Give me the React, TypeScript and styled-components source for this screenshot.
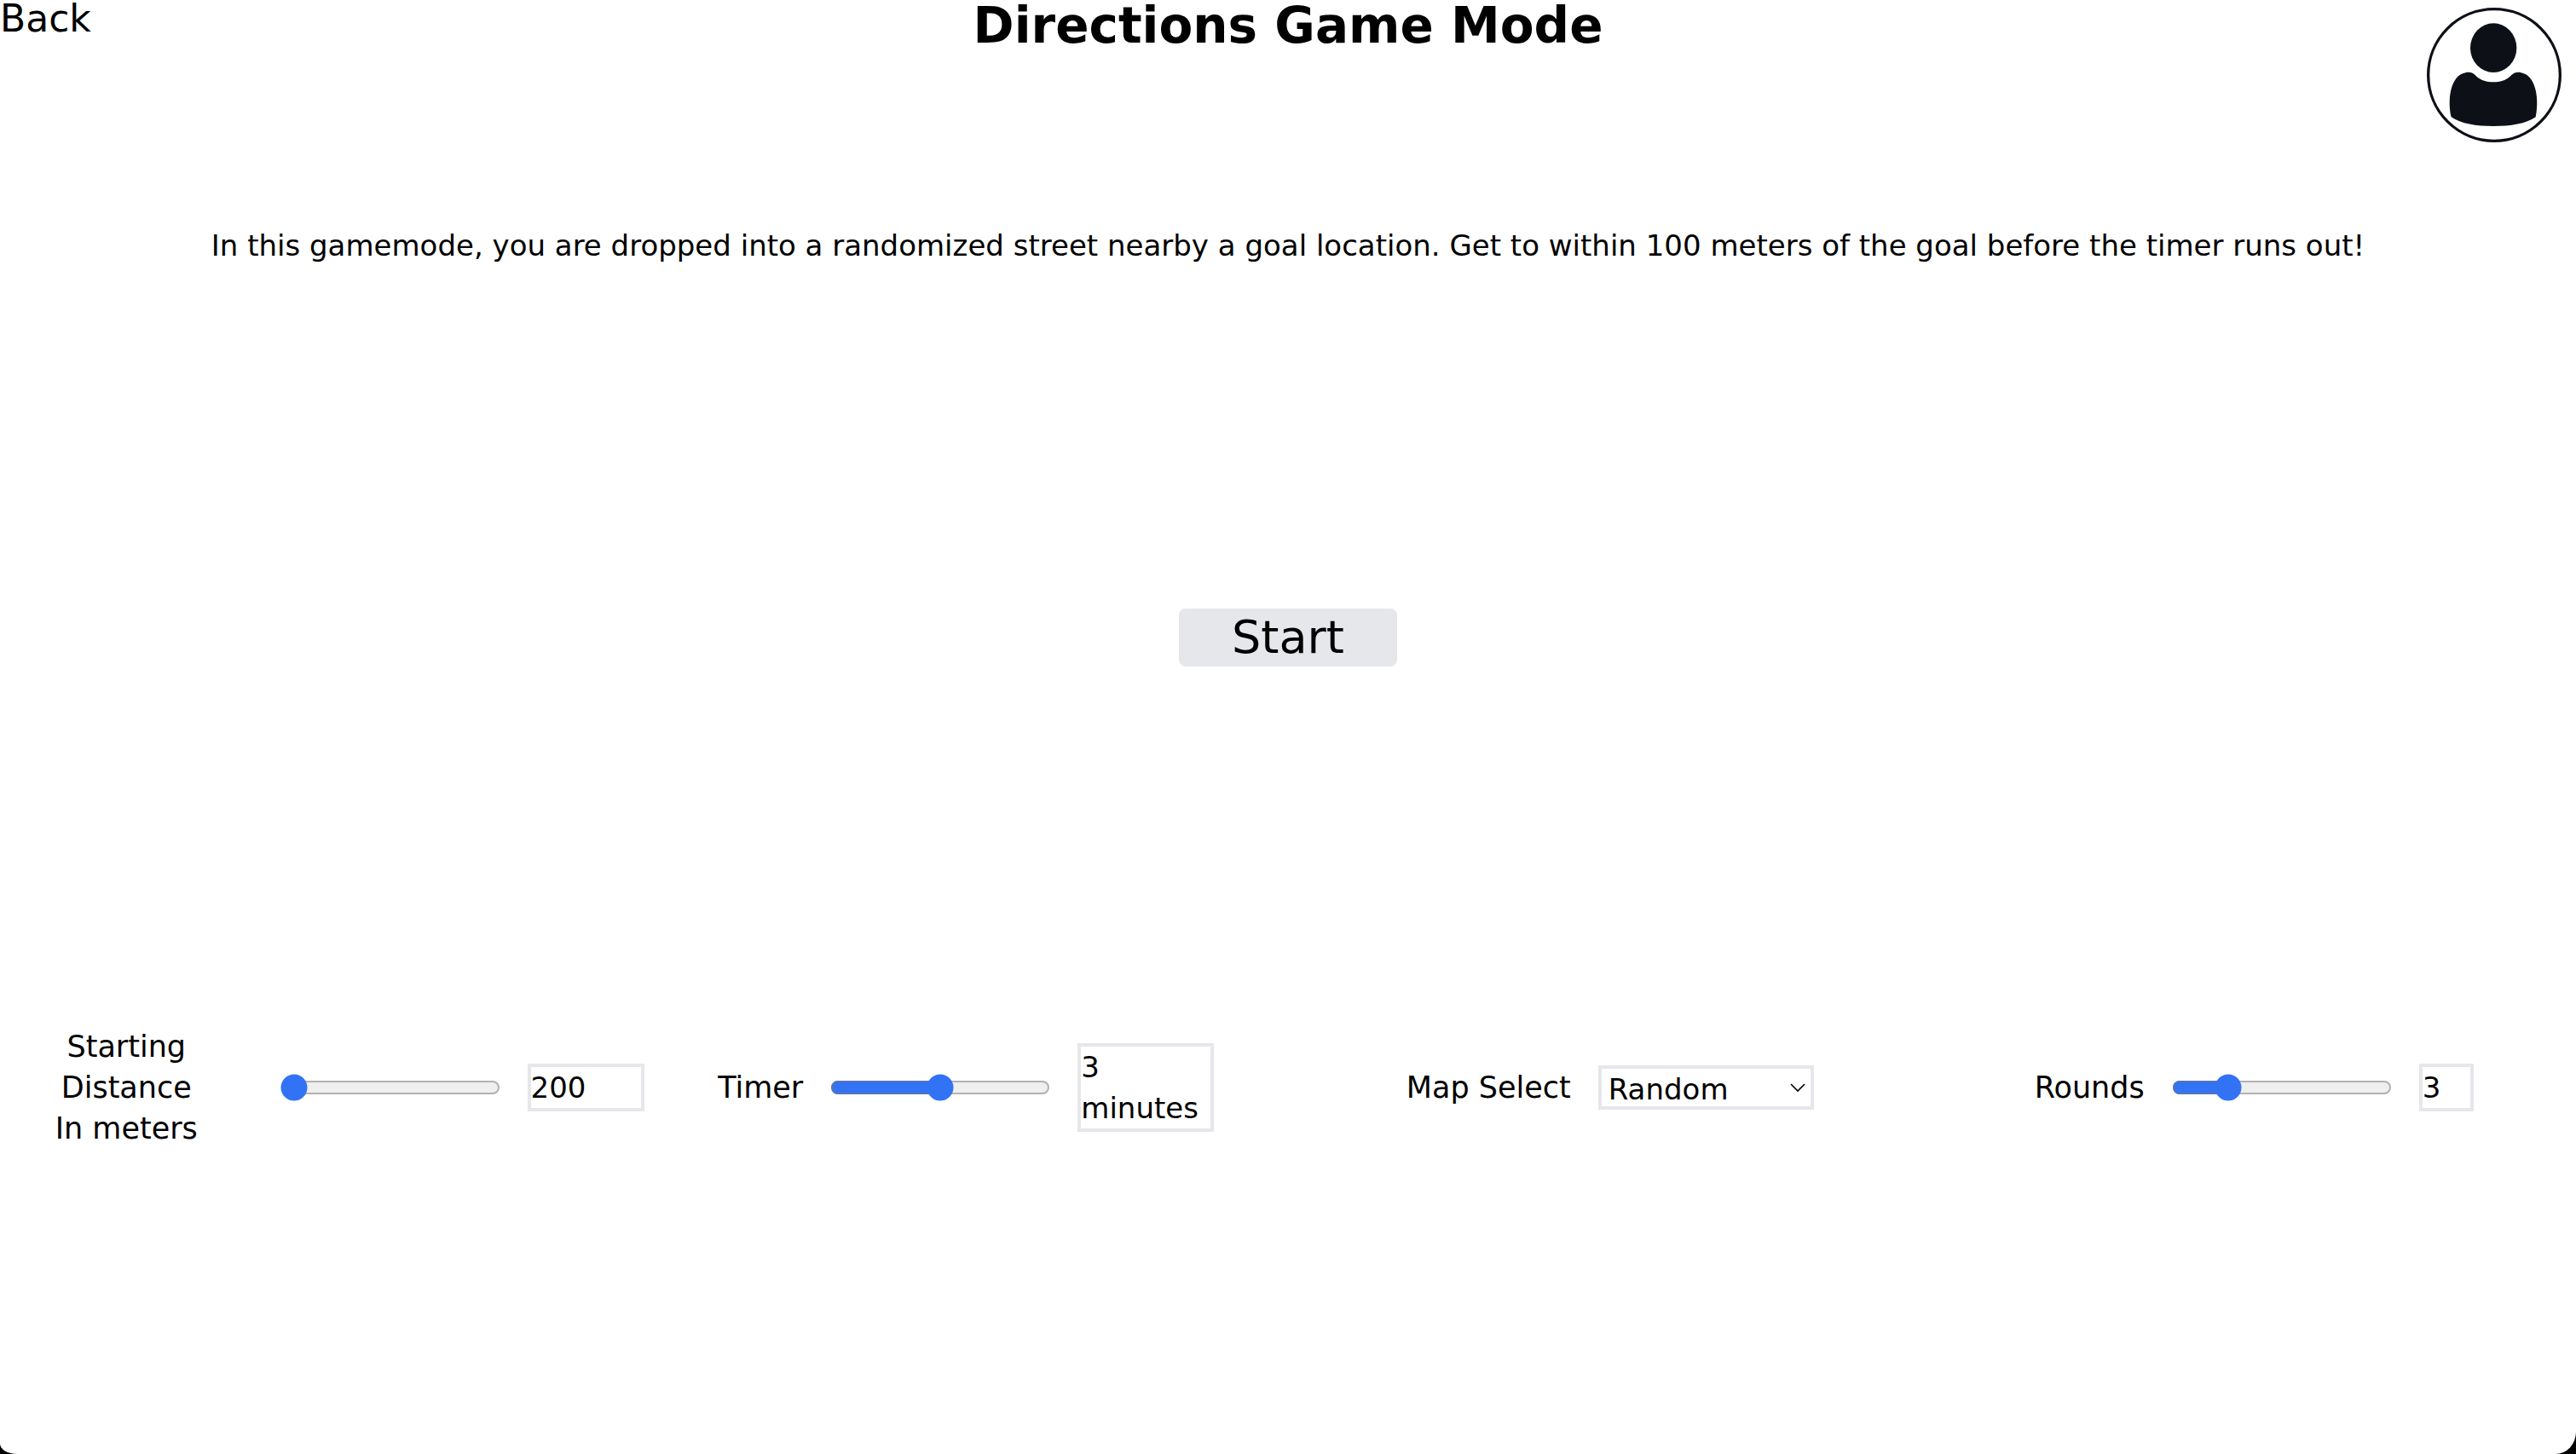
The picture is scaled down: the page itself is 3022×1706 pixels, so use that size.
import React, { useState } from "react";
import styled, { createGlobalStyle } from "styled-components";

const GlobalStyle = createGlobalStyle`
  *, *::before, *::after {
    box-sizing: border-box;
  }
  body {
    margin: 0;
    background: #000;
    color: #000;
    font-family: "DejaVu Sans", Orbitron, sans-serif;
    font-size: 34px;
    line-height: 48px;
  }
`;

const Page = styled.div`
  display: flex;
  flex-direction: column;
  min-height: 100vh;
  background: #fff;
  border-radius: 0 0 24px 20px / 0 0 26px 12px;
`;

const Header = styled.header`
  display: grid;
  grid-template-columns: 1fr auto 1fr;
  align-items: start;
`;

const BackLink = styled.a`
  justify-self: start;
  color: inherit;
  font-size: 44px;
  line-height: 44px;
  text-decoration: none;
`;

const Title = styled.h1`
  margin: 0;
  font-size: 58px;
  font-weight: 700;
  line-height: 60px;
`;

const ProfileButton = styled.button`
  justify-self: end;
  display: flex;
  margin: 9px 17px 0 0;
  padding: 0;
  border: 0;
  border-radius: 50%;
  background: none;
  cursor: pointer;

  svg {
    width: 158px;
    height: 158px;
  }
`;

const Main = styled.main`
  flex: 1;
  display: grid;
  grid-template-rows: 242fr 678fr 376fr 242fr;
  align-items: center;
`;

const Description = styled.p`
  margin: 0;
  padding: 0 32px;
  text-align: center;
`;

const StartButton = styled.button`
  justify-self: center;
  width: 256px;
  padding: 0;
  border: 0;
  border-radius: 8px;
  background: #e5e7eb;
  color: inherit;
  font: inherit;
  font-size: 54px;
  line-height: 68px;
  cursor: pointer;
`;

const Settings = styled.form`
  display: grid;
  grid-template-columns: repeat(4, minmax(0, 1fr));
  align-items: center;
`;

const Setting = styled.div`
  display: flex;
  align-items: center;
  justify-content: center;
  gap: 32px;
`;

const Label = styled.label<{ $stacked?: boolean }>`
  flex: ${(p) => (p.$stacked ? "1" : "none")};
  font-size: 35px;
  text-align: center;
`;

const Line = styled.span`
  display: block;
`;

const Slider = styled.input.attrs({ type: "range" })`
  flex: none;
  zoom: 2;
  width: 129px;
  margin: 0;
  accent-color: #3273f6;
`;

const NumberBox = styled.input.attrs({ type: "number" })<{ $width: number }>`
  flex: none;
  width: ${(p) => p.$width}px;
  height: 56px;
  padding: 0;
  border: 4px solid #e5e7eb;
  background: #fff;
  color: inherit;
  font: inherit;
`;

const TimeBox = styled.output`
  flex: none;
  width: 160px;
  border: 4px solid #e5e7eb;
`;

const SelectWrap = styled.div`
  display: grid;
  align-items: center;
  width: 253px;

  > * {
    grid-area: 1 / 1;
  }

  svg {
    justify-self: end;
    width: 18px;
    height: 12px;
    margin-right: 10px;
    pointer-events: none;
  }
`;

const MapSelect = styled.select`
  appearance: none;
  width: 100%;
  height: 52px;
  padding: 0 8px 4px;
  border: 4px solid #e5e7eb;
  border-radius: 0;
  background: #fff;
  color: inherit;
  font: inherit;
`;

function ProfileIcon() {
  return (
    <svg viewBox="75 27 474 474" aria-hidden="true">
      <circle cx="312" cy="264" r="232" fill="#fff" stroke="#0d1017" strokeWidth="10" />
      <ellipse cx="309.500" cy="168.500" rx="81.500" ry="86.500" fill="#0d1017" />
      <path
        d="M161 412 C148 356 155 264 214 255 C232 253 240 259 251 270 C266 283 286 289 309 289 C333 289 352 283 367 270 C378 259 387 253 404 255 C463 264 470 356 458 412 C424 436 370 444 309 444 C248 444 196 436 161 412 Z"
        fill="#0d1017"
      />
    </svg>
  );
}

export default function App() {
  const [distance, setDistance] = useState(200);
  const [minutes, setMinutes] = useState(3);
  const [rounds, setRounds] = useState(3);
  const [map, setMap] = useState("Random");

  return (
    <>
      <GlobalStyle />
      <Page>
        <Header>
          <BackLink href="#back">Back</BackLink>
          <Title>Directions Game Mode</Title>
          <ProfileButton type="button" aria-label="Profile">
            <ProfileIcon />
          </ProfileButton>
        </Header>
        <Main>
          <Description>
            In this gamemode, you are dropped into a randomized street nearby a goal location. Get to within 100
            meters of the goal before the timer runs out!
          </Description>
          <StartButton type="submit" form="settings">
            Start
          </StartButton>
          <Settings id="settings" onSubmit={(e) => e.preventDefault()}>
            <Setting>
              <Label htmlFor="distance" $stacked>
                <Line>Starting</Line>
                <Line>Distance</Line>
                <Line>In meters</Line>
              </Label>
              <Slider
                id="distance"
                min={200}
                max={5000}
                step={100}
                value={distance}
                onChange={(e) => setDistance(Number(e.target.value))}
              />
              <NumberBox
                $width={137}
                aria-label="Starting distance in meters"
                value={distance}
                onChange={(e) => setDistance(Number(e.target.value))}
              />
            </Setting>
            <Setting>
              <Label htmlFor="timer">Timer</Label>
              <Slider
                id="timer"
                min={1}
                max={5}
                value={minutes}
                onChange={(e) => setMinutes(Number(e.target.value))}
              />
              <TimeBox htmlFor="timer">{minutes} minutes</TimeBox>
            </Setting>
            <Setting>
              <Label htmlFor="map">Map Select</Label>
              <SelectWrap>
                <MapSelect id="map" value={map} onChange={(e) => setMap(e.target.value)}>
                  <option>Random</option>
                </MapSelect>
                <svg viewBox="0 0 18 12" fill="none" stroke="#000" strokeWidth="1.6" aria-hidden="true">
                  <path d="M1 2 L9 10 L17 2" />
                </svg>
              </SelectWrap>
            </Setting>
            <Setting>
              <Label htmlFor="rounds">Rounds</Label>
              <Slider
                id="rounds"
                min={1}
                max={10}
                value={rounds}
                onChange={(e) => setRounds(Number(e.target.value))}
              />
              <NumberBox
                $width={64}
                aria-label="Number of rounds"
                value={rounds}
                onChange={(e) => setRounds(Number(e.target.value))}
              />
            </Setting>
          </Settings>
        </Main>
      </Page>
    </>
  );
}
